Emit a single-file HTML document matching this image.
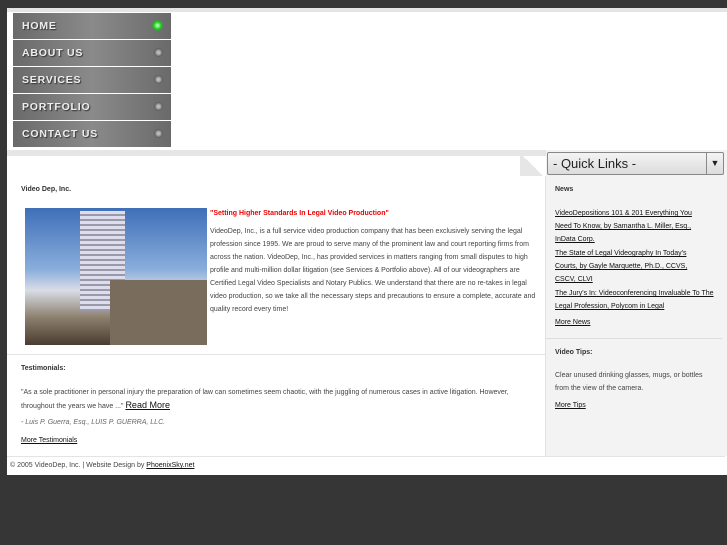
<!DOCTYPE html>
<html><head><style>
body{margin:0;width:727px;height:545px;background:#363636;font-family:"Liberation Sans",sans-serif;position:relative;overflow:hidden}
.p{position:absolute}
.nav{position:absolute;left:13px;width:158px;height:26px;background:linear-gradient(90deg,#6a6a6a,#8a8a8a 50%,#6a6a6a);color:#eee;font-weight:bold;font-size:10.5px;letter-spacing:.8px;line-height:26px;text-indent:9px;text-shadow:1px 1px 1px #333}
.nav i{position:absolute;right:8px;top:8px;width:9px;height:9px;border-radius:50%;background:radial-gradient(#bbb 20%,#555 70%)}
.s{font-size:7px;color:#333;line-height:13px}
a{color:#111;text-decoration:underline}
</style></head><body>
<div class="p" style="left:7px;top:8px;width:720px;height:467px;background:#fff"></div>
<div class="p" style="left:7px;top:8px;width:720px;height:4px;background:#e4e4e4"></div>
<div class="p" style="left:7px;top:150px;width:540px;height:6px;background:#e6e6e6"></div>
<div class="nav" style="top:13px">HOME<i style="background:radial-gradient(#9f9 15%,#2c2 45%,#575 80%);width:11px;height:11px;top:7px"></i></div>
<div class="nav" style="top:40px">ABOUT US<i></i></div>
<div class="nav" style="top:67px">SERVICES<i></i></div>
<div class="nav" style="top:94px">PORTFOLIO<i></i></div>
<div class="nav" style="top:121px">CONTACT US<i></i></div>
<div class="p" style="left:545px;top:150px;width:182px;height:306px;background:#f3f3f3;border-left:1px solid #e2e2e2"></div>
<div class="p" style="left:520px;top:156px;width:26px;height:20px;background:linear-gradient(225deg,#fff 50%,#e6e6e6 50%)"></div>
<div class="p" style="left:547px;top:152px;width:175px;height:21px;background:linear-gradient(#f4f4f4,#dcdcdc);border:1px solid #888;border-radius:2px;font-size:13px;line-height:21px;color:#222;text-indent:5px">- Quick Links -<span class="p" style="right:0;top:0;width:16px;height:21px;border-left:1px solid #888;font-size:9px;text-align:center;text-indent:0">▼</span></div>
<div class="p s" style="left:21px;top:183px;font-weight:bold">Video Dep, Inc.</div>
<div class="p" style="left:25px;top:208px;width:182px;height:137px;background:linear-gradient(180deg,#3f6fb8 0%,#8aaedc 45%,#d8dde6 60%,#8c7f6e 80%,#4a3c30 100%)"></div>
<div class="p" style="left:80px;top:211px;width:45px;height:100px;background:repeating-linear-gradient(180deg,#dde 0 3px,#99a 3px 5px)"></div>
<div class="p" style="left:110px;top:280px;width:97px;height:65px;background:#7a6c5c"></div>
<div class="p s" style="left:210px;top:207px;color:#e00;font-weight:bold">"Setting Higher Standards In Legal Video Production"</div>
<div class="p s" style="left:210px;top:225px;width:330px;color:#444">VideoDep, Inc., is a full service video production company that has been exclusively serving the legal profession since 1995. We are proud to serve many of the prominent law and court reporting firms from across the nation. VideoDep, Inc., has provided services in matters ranging from small disputes to high profile and multi-million dollar litigation (see Services &amp; Portfolio above). All of our videographers are Certified Legal Video Specialists and Notary Publics. We understand that there are no re-takes in legal video production, so we take all the necessary steps and precautions to ensure a complete, accurate and quality record every time!</div>
<div class="p" style="left:7px;top:354px;width:538px;height:1px;background:#e4e4e4"></div>
<div class="p s" style="left:21px;top:362px;font-weight:bold">Testimonials:</div>
<div class="p s" style="left:21px;top:386px;width:500px;color:#444">"As a sole practitioner in personal injury the preparation of law can sometimes seem chaotic, with the juggling of numerous cases in active litigation. However, throughout the years we have ..." <a style="font-size:9px">Read More</a></div>
<div class="p s" style="left:21px;top:416px;font-style:italic;color:#666">- Luis P. Guerra, Esq., LUIS P. GUERRA, LLC.</div>
<div class="p s" style="left:21px;top:434px"><a>More Testimonials</a></div>
<div class="p" style="left:7px;top:456px;width:718px;height:1px;background:#e4e4e4"></div>
<div class="p s" style="left:10px;top:459px;color:#444">© 2005 VideoDep, Inc. | Website Design by <a>PhoenixSky.net</a></div>
<div class="p s" style="left:555px;top:183px;font-weight:bold">News</div>
<div class="p s" style="left:555px;top:207px;width:150px"><a>VideoDepositions 101 &amp; 201 Everything You Need To Know, by Samantha L. Miller, Esq., InData Corp.</a></div>
<div class="p s" style="left:555px;top:247px;width:150px"><a>The State of Legal Videography In Today's Courts, by Gayle Marquette, Ph.D., CCVS, CSCV, CLVI</a></div>
<div class="p s" style="left:555px;top:287px;width:160px"><a>The Jury's In: Videoconferencing Invaluable To The Legal Profession, Polycom in Legal</a></div>
<div class="p s" style="left:555px;top:316px"><a>More News</a></div>
<div class="p" style="left:546px;top:338px;width:176px;height:1px;background:#ddd"></div>
<div class="p s" style="left:555px;top:346px;font-weight:bold">Video Tips:</div>
<div class="p s" style="left:555px;top:369px;width:160px;color:#444">Clear unused drinking glasses, mugs, or bottles from the view of the camera.</div>
<div class="p s" style="left:555px;top:399px"><a>More Tips</a></div>
</body></html>
